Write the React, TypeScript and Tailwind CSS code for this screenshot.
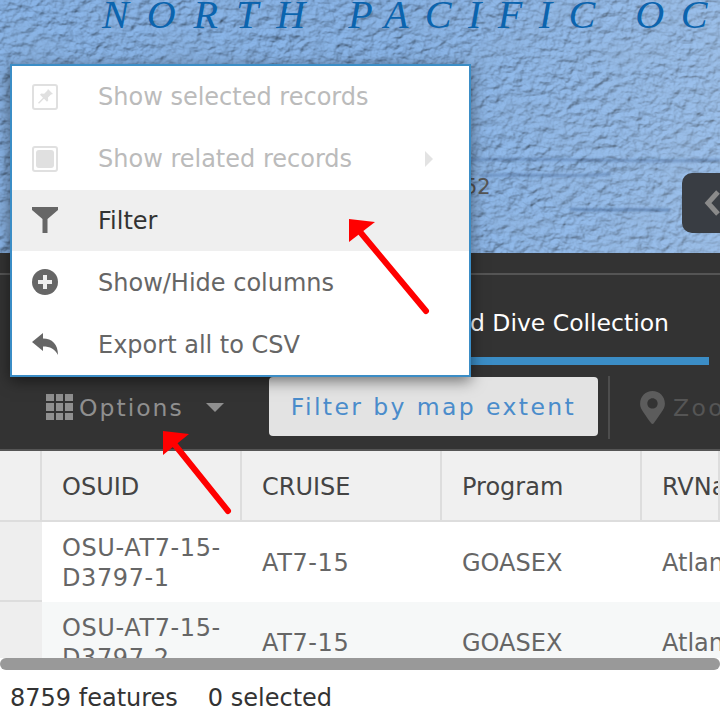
import { FaMapMarkerAlt } from "react-icons/fa";

const columns = ["OSUID", "CRUISE", "Program", "RVName"];

const rows = [
  { id: "OSU-AT7-15-D3797-1", cruise: "AT7-15", program: "GOASEX", vessel: "Atlantis", striped: false },
  { id: "OSU-AT7-15-D3797-2", cruise: "AT7-15", program: "GOASEX", vessel: "Atlantis", striped: true },
];

function MapBackground() {
  return (
    <svg className="block h-full w-full" aria-hidden="true">
      <defs>
        <linearGradient id="fade" x1="0" y1="0" x2="1" y2="0">
          <stop offset="0.55" stopColor="#ffffff" stopOpacity="0" />
          <stop offset="1" stopColor="#ffffff" stopOpacity="0.15" />
        </linearGradient>
      </defs>
      <filter id="relief" x="0" y="0" width="100%" height="100%">
        <feTurbulence type="fractalNoise" baseFrequency="0.1 0.13" numOctaves="3" seed="8" result="noise" />
        <feDiffuseLighting in="noise" lightingColor="#86b0e2" surfaceScale="3.2" diffuseConstant="1.08">
          <feDistantLight azimuth="235" elevation="58" />
        </feDiffuseLighting>
        <feGaussianBlur stdDeviation="0.6" />
      </filter>
      <filter id="patches" x="0" y="0" width="100%" height="100%">
        <feTurbulence type="fractalNoise" baseFrequency="0.02 0.03" numOctaves="2" seed="3" />
        <feColorMatrix values="0 0 0 0 0.25  0 0 0 0 0.42  0 0 0 0 0.68  1.8 0 0 0 -0.7" />
      </filter>
      <filter id="soft">
        <feGaussianBlur stdDeviation="0.8" />
      </filter>
      <rect width="100%" height="100%" filter="url(#relief)" />
      <rect width="100%" height="100%" filter="url(#patches)" opacity="0.45" />
      <rect width="100%" height="100%" fill="url(#fade)" />
      <g filter="url(#soft)" fill="none" stroke="#4a6c9c">
        <path d="M470 160 C540 157 620 163 720 160" strokeWidth="3" opacity="0.45" />
        <path d="M480 176 C520 173 560 178 610 174" strokeWidth="3" opacity="0.45" />
        <path d="M570 209 C600 211 630 209 670 210" strokeWidth="3" opacity="0.6" />
      </g>
    </svg>
  );
}

function PinBoxIcon() {
  return (
    <svg width="26" height="26" viewBox="0 0 26 26" className="blur-[0.4px]" aria-hidden="true">
      <rect x="1" y="1" width="24" height="24" rx="2" fill="none" stroke="#e0e0e0" strokeWidth="2" />
      <path d="M16 5l5 5-2 .6-3 3 .2 3-1.2 1.2-3-3-5 5-1-1 5-5-3-3 1.2-1.2 3 .2 3-3z" fill="#e0e0e0" />
    </svg>
  );
}

function SquareBoxIcon() {
  return (
    <svg width="26" height="26" viewBox="0 0 26 26" className="blur-[0.4px]" aria-hidden="true">
      <rect x="1" y="1" width="24" height="24" rx="2" fill="none" stroke="#e0e0e0" strokeWidth="2" />
      <rect x="4" y="4" width="18" height="18" rx="3" fill="#e0e0e0" />
    </svg>
  );
}

function FunnelIcon() {
  return (
    <svg width="26" height="26" viewBox="0 0 26 26" className="blur-[0.4px]" aria-hidden="true">
      <path d="M0 0H26V3L15.5 12V26H10.5V12L0 3Z" fill="#666" />
    </svg>
  );
}

function PlusCircleIcon() {
  return (
    <svg width="26" height="26" viewBox="0 0 26 26" className="blur-[0.4px]" aria-hidden="true">
      <circle cx="13" cy="13" r="13" fill="#666" />
      <path d="M11 6h4v5h5v4h-5v5h-4v-5H6v-4h5z" fill="#eee" />
    </svg>
  );
}

function ReplyIcon() {
  return (
    <svg width="26" height="26" viewBox="0 0 26 26" className="blur-[0.4px]" aria-hidden="true">
      <path d="M0 11L11 2V7.5C20 7.5 26 13 26 24C23 18 18 15.5 11 15.5V20Z" fill="#666" />
    </svg>
  );
}

function Arrows() {
  return (
    <svg className="pointer-events-none absolute inset-0 z-30" width="720" height="720" aria-hidden="true">
      <path d="M361 233L426 311" stroke="#ff0000" strokeWidth="6" strokeLinecap="round" />
      <path d="M349 219L375 222L349 242Z" fill="#ff0000" />
      <path d="M175 445L228 511" stroke="#ff0000" strokeWidth="6" strokeLinecap="round" />
      <path d="M163 431L189 434L163 455Z" fill="#ff0000" />
    </svg>
  );
}

function OptionsMenu() {
  const items = [
    { label: "Show selected records", icon: <PinBoxIcon />, disabled: true },
    { label: "Show related records", icon: <SquareBoxIcon />, disabled: true, more: true },
    { label: "Filter", icon: <FunnelIcon />, active: true },
    { label: "Show/Hide columns", icon: <PlusCircleIcon /> },
    { label: "Export all to CSV", icon: <ReplyIcon /> },
  ];

  return (
    <div className="absolute left-[10px] top-[64px] z-20 w-[461px] border-2 border-[#3b8dc6] bg-white shadow-[0_4px_14px_rgba(0,0,0,0.5)]">
      {items.map((item) => (
        <div
          key={item.label}
          className={`relative flex h-[61.8px] items-center pl-[20px] ${item.active ? "bg-[#efefef] text-[#333]" : ""} ${
            item.disabled ? "text-[#bbb]" : item.active ? "" : "text-[#666]"
          }`}
        >
          <span className="flex w-[66px] shrink-0">{item.icon}</span>
          <span className="pt-[1px] text-[24px]">{item.label}</span>
          {item.more ? (
            <span className="absolute right-[36px] top-[23px] h-0 w-0 border-y-[8px] border-l-[8px] border-y-transparent border-l-[#e3e3e3]" />
          ) : null}
        </div>
      ))}
    </div>
  );
}

export default function App() {
  return (
    <div className="relative h-[720px] w-[720px] overflow-hidden bg-white font-['DejaVu_Sans',sans-serif]">
      <div className="relative h-[253px] overflow-hidden bg-[#7ba5d8]">
        <MapBackground />
        <span className="absolute left-[102px] top-[-15px] whitespace-nowrap font-['Liberation_Serif',serif] text-[40px] italic text-[#0b64ae] [word-spacing:-3px]">
          <span className="tracking-[18px]">NORTH </span>
          <span className="tracking-[16.5px]">PACIFIC OC</span>
        </span>
        <span className="absolute left-[464px] top-[172px] text-[21px] text-[#555]">52</span>
        <button
          type="button"
          className="absolute right-0 top-[173px] flex h-[60px] w-[38px] items-center justify-end rounded-l-[10px] bg-[#393d43]"
        >
          <svg width="16" height="26" viewBox="0 0 16 26" aria-hidden="true">
            <path d="M14 2L4 13L14 24" fill="none" stroke="#8a8a8a" strokeWidth="5" />
          </svg>
        </button>
      </div>

      <div className="h-[196px] overflow-hidden bg-[#333]">
        <div className="h-[22px] border-b-2 border-[#555]" />
        <div className="ml-[40px] flex h-[90px] w-[669px] items-center justify-end border-b-[8px] border-[#3b8dc6] pr-[40px] pt-[16px] text-[23.5px] text-white">
          and Dive Collection
        </div>
        <div className="flex h-[84px] items-center pl-[46px]">
          <div className="grid w-[27px] shrink-0 grid-cols-3 gap-[2px]">
            {Array.from({ length: 9 }).map((_, i) => (
              <span key={i} className="h-[7.5px] bg-[#8f8f8f]" />
            ))}
          </div>
          <span className="ml-[6px] w-[104px] shrink-0 whitespace-nowrap pt-[3px] text-[23.5px] tracking-[2px] text-[#8f8f8f]">
            Options
          </span>
          <span className="ml-[23px] h-0 w-0 shrink-0 border-x-[9px] border-t-[9px] border-x-transparent border-t-[#8f8f8f]" />
          <button
            type="button"
            className="ml-[45px] -mt-[1px] h-[59px] w-[329px] shrink-0 whitespace-nowrap rounded-[4px] bg-[#e3e3e3] pt-[3px] text-[23.5px] tracking-[2.4px] text-[#4a8ccb]"
          >
            Filter by map extent
          </button>
          <span className="ml-[10px] h-[63px] w-[2px] shrink-0 bg-[#4d4d4d]" />
          <FaMapMarkerAlt className="ml-[26px] shrink-0 text-[33px] text-[#5c5c5c]" />
          <span className="ml-[4px] shrink-0 whitespace-nowrap pt-[3px] text-[23.5px] tracking-[2.4px] text-[#555]">Zoom</span>
        </div>
      </div>

      <div className="grid grid-cols-[42px_200px_200px_200px_78px] border-t-2 border-[#555]">
        <div className="h-[71px] border-b-2 border-r-2 border-[#ddd] bg-[#f0f0f0]" />
        {columns.map((column) => (
          <div
            key={column}
            className="flex h-[71px] items-center overflow-hidden whitespace-nowrap border-b-2 border-r-2 border-[#ddd] bg-[#f0f0f0] pl-[20px] pt-[2px] text-[24px] text-[#444]"
          >
            {column}
          </div>
        ))}
      </div>
      <div className="h-[136px] overflow-hidden">
        {rows.map((row) => (
          <div key={row.id} className="grid h-[80px] grid-cols-[42px_200px_200px_200px_78px]">
            <div className="border-b-2 border-[#ddd] bg-[#eee]" />
            {[row.id, row.cruise, row.program, row.vessel].map((value) => (
              <div
                key={value}
                className={`flex items-center overflow-hidden pl-[20px] pt-[2px] text-[24px] leading-[30px] text-[#666] ${
                  value.includes("-") ? "tracking-[0.6px]" : ""
                } ${row.striped ? "bg-[#f6f8f8]" : "bg-white"}`}
              >
                <span className="whitespace-pre">{value.replace("15-", "15-\n")}</span>
              </div>
            ))}
          </div>
        ))}
      </div>

      <div className="h-[12px] rounded-full bg-[#999]" />
      <div className="flex h-[50px] items-center pl-[10px] pt-[5px] text-[24px] text-[#333]">
        <span>8759 features</span>
        <span className="ml-[30px]">0 selected</span>
      </div>

      <OptionsMenu />
      <Arrows />
    </div>
  );
}
